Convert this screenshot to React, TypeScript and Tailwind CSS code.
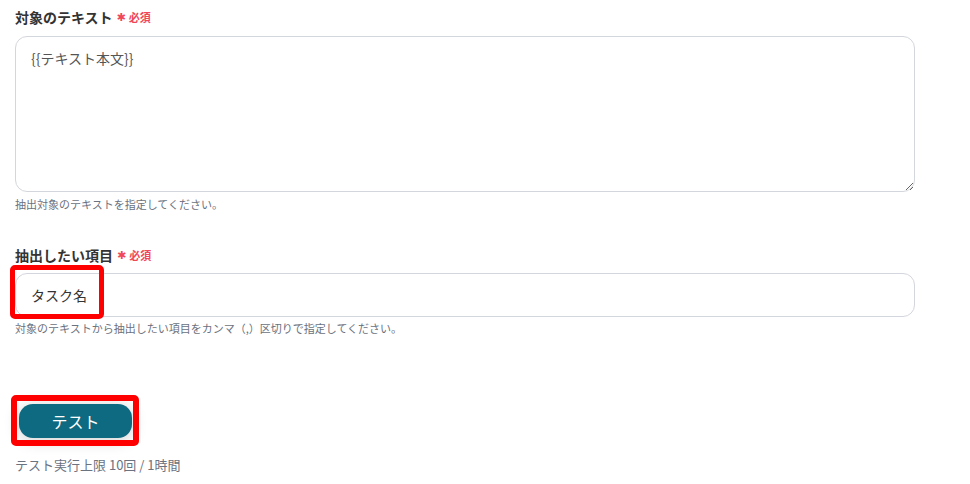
import React from 'react';

const Required: React.FC = () => (
  <span className="ml-[4px] inline-flex items-center text-[11px] font-bold text-[#f0475a]">
    <span className="mr-[3px] text-[11px] leading-none" style={{ fontFamily: '"DejaVu Sans", sans-serif' }}>✱</span>必須
  </span>
);

const App: React.FC = () => {
  return (
    <div
      className="min-h-[484px] w-[970px] bg-white pl-[15px] pt-[7px] text-[#333]"
      style={{ fontFamily: '"Noto Sans CJK JP", "Noto Sans", sans-serif' }}
    >
      <div className="w-[900px]">
        {/* 対象のテキスト */}
        <div className="flex h-5 items-center text-[14px] font-bold leading-5">
          対象のテキスト
          <Required />
        </div>
        <textarea
          className="mt-[9px] block h-[156px] w-full resize-y rounded-[12px] border border-[#d3d6dc] px-[15px] pt-[11px] text-[14px] leading-5 text-[#555] outline-none"
          defaultValue="{{テキスト本文}}"
        />
        <p className="mt-[5px] text-[11px] leading-[14px] text-[#6b7280]">
          抽出対象のテキストを指定してください。
        </p>

        {/* 抽出したい項目 */}
        <div className="mt-[34px] flex h-5 items-center text-[14px] font-bold leading-5">
          抽出したい項目
          <Required />
        </div>
        <div className="relative mt-2">
          <input
            className="block h-[44px] w-full rounded-[12px] border border-[#d3d6dc] px-[15px] text-[14px] text-[#333] outline-none"
            defaultValue="タスク名"
          />
          <div className="pointer-events-none absolute left-[-5px] top-[-8px] h-[54px] w-[94px] rounded-[5px] border-[5px] border-[#ff0000]" />
        </div>
        <p className="mt-1 text-[11px] leading-[14px] text-[#6b7280]">
          対象のテキストから抽出したい項目をカンマ（,）区切りで指定してください。
        </p>

        {/* テスト */}
        <div className="relative ml-[4px] mt-[69px] w-[113px]">
          <button className="flex h-[34px] w-[113px] items-center justify-center rounded-[14px] bg-[#0e6a80] text-[16px] text-white shadow-[0_2px_16px_rgba(0,0,0,0.2)]">
            テスト
          </button>
          <div className="pointer-events-none absolute left-[-8px] top-[-9px] h-[51px] w-[128px] rounded-[5px] border-[6px] border-[#ff0000]" />
        </div>
        <p className="mt-[19px] text-[13px] leading-4 text-[#6b7280]">
          テスト実行上限 10回 / 1時間
        </p>
      </div>
    </div>
  );
};

export default App;
